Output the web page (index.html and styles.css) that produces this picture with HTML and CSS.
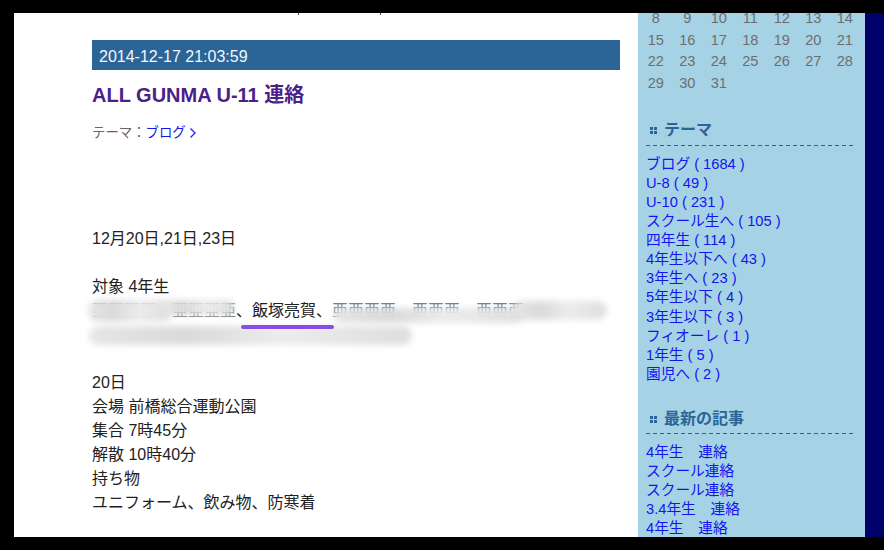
FILE: index.html
```html
<!DOCTYPE html>
<html lang="ja">

<head>
    <meta charset="UTF-8">
    <title>ALL GUNMA U-11 連絡</title>
    <link rel="stylesheet" href="styles.css">
</head>

<body>
    <div class="page">
        <div class="main">
            <span class="tick tick-a"></span>
            <span class="tick tick-b"></span>
            <div class="entry-date">2014-12-17 21:03:59</div>
            <h1 class="entry-title">ALL GUNMA U-11 連絡</h1>
            <div class="entry-theme">テーマ：<a href="#">ブログ</a>
                <svg class="chevron" width="8" height="12" viewBox="0 0 8 12" fill="none" stroke="#2a2ae8" stroke-width="1.4">
                    <polyline points="1.5 1.5 6 6 1.5 10.5"></polyline>
                </svg>
            </div>
            <div class="entry-body">
                <p>12月20日,21日,23日</p>
                <div class="names">
                    <div>対象 4年生</div>
                    <div class="names-row"><span class="hidden-name">亜亜亜亜、亜亜亜亜</span>、飯塚亮賀、<span class="hidden-name">亜亜亜亜、亜亜亜、亜亜亜</span></div>
                    <div class="names-row"></div>
                    <span class="blur blur-a"></span>
                    <span class="blur blur-a2"></span>
                    <span class="blur blur-b"></span>
                    <span class="blur blur-b2"></span>
                    <span class="blur blur-c"></span>
                    <span class="marker"></span>
                </div>
                <p class="block">20日<br>会場 前橋総合運動公園<br>集合 7時45分<br>解散 10時40分<br>持ち物<br>ユニフォーム、飲み物、防寒着</p>
            </div>
        </div>

        <div class="side">
            <div class="calendar">
                <span>8</span><span>9</span><span>10</span><span>11</span><span>12</span><span>13</span><span>14</span>
                <span>15</span><span>16</span><span>17</span><span>18</span><span>19</span><span>20</span><span>21</span>
                <span>22</span><span>23</span><span>24</span><span>25</span><span>26</span><span>27</span><span>28</span>
                <span>29</span><span>30</span><span>31</span>
            </div>

            <h2 class="side-title">テーマ</h2>
            <ul class="side-list">
                <li><a href="#">ブログ ( 1684 )</a></li>
                <li><a href="#">U-8 ( 49 )</a></li>
                <li><a href="#">U-10 ( 231 )</a></li>
                <li><a href="#">スクール生へ ( 105 )</a></li>
                <li><a href="#">四年生 ( 114 )</a></li>
                <li><a href="#">4年生以下へ ( 43 )</a></li>
                <li><a href="#">3年生へ ( 23 )</a></li>
                <li><a href="#">5年生以下 ( 4 )</a></li>
                <li><a href="#">3年生以下 ( 3 )</a></li>
                <li><a href="#">フィオーレ ( 1 )</a></li>
                <li><a href="#">1年生 ( 5 )</a></li>
                <li><a href="#">園児へ ( 2 )</a></li>
            </ul>

            <h2 class="side-title">最新の記事</h2>
            <ul class="side-list">
                <li><a href="#">4年生　連絡</a></li>
                <li><a href="#">スクール連絡</a></li>
                <li><a href="#">スクール連絡</a></li>
                <li><a href="#">3.4年生　連絡</a></li>
                <li><a href="#">4年生　連絡</a></li>
            </ul>
        </div>
    </div>
</body>

</html>
```

FILE: styles.css
```css
html,
body {
    margin: 0;
    height: 100%;
    background-color: #000;
    overflow: hidden;
}

body {
    font-family: "Liberation Sans", "Noto Sans CJK JP", sans-serif;
    padding: 13px 0;
    box-sizing: border-box;
}

a {
    color: #1414ee;
    text-decoration: none;
}

.page {
    display: flex;
    height: 524px;
    margin-left: 14px;
    background-color: #00006a;
    overflow: hidden;
}

.main {
    position: relative;
    width: 528px;
    padding: 27px 18px 0 78px;
    flex-shrink: 0;
    background-color: #fff;
    color: #222;
}

.tick {
    position: absolute;
    top: 0;
    width: 1px;
    height: 2px;
    background-color: #444;
}

.tick-a {
    left: 284px;
}

.tick-b {
    left: 366px;
}

.entry-date {
    height: 30px;
    padding-left: 7px;
    background-color: #2b6496;
    color: #f4f8fb;
    font-size: 16px;
    line-height: 33px;
}

.entry-title {
    margin: 10px 0 0;
    color: #4b2088;
    font-size: 20px;
    line-height: 30px;
    font-weight: bold;
}

.entry-theme {
    margin-top: 13px;
    color: #666;
    font-size: 13.4px;
    line-height: 20px;
}

.chevron {
    vertical-align: -2px;
}

.entry-body {
    margin-top: 84px;
    font-size: 16px;
    line-height: 24px;
}

.entry-body p {
    margin: 0 0 24px;
}

.names {
    position: relative;
    margin-bottom: 24px;
}

.names-row {
    height: 24px;
    white-space: nowrap;
    overflow: hidden;
}

.hidden-name {
    color: #777;
}

/* smudges over the names, the tops or bottoms of some letters stay visible */
.blur {
    position: absolute;
    background: linear-gradient(90deg, #e6e6e6, #dadada 30%, #ececec 60%, #dedede);
    border-radius: 10px;
    filter: blur(3px);
}

.blur-a {
    left: -4px;
    top: 25px;
    width: 84px;
    height: 22px;
}

.blur-a2 {
    left: 70px;
    top: 25px;
    width: 73px;
    height: 15px;
}

.blur-b {
    left: 241px;
    top: 33px;
    width: 190px;
    height: 15px;
}

.blur-b2 {
    left: 420px;
    top: 26px;
    width: 95px;
    height: 19px;
}

.blur-c {
    left: -3px;
    top: 51px;
    width: 323px;
    height: 19px;
}

.marker {
    position: absolute;
    left: 149px;
    top: 50px;
    width: 93px;
    height: 4px;
    border-radius: 2px;
    background-color: #8a4be8;
}

.side {
    flex: 0 0 227px;
    padding: 0 9px 0 8px;
    box-sizing: border-box;
    background-color: #a5d3e5;
    overflow: hidden;
}

.calendar {
    display: grid;
    grid-template-columns: repeat(7, 31.5px);
    grid-auto-rows: 21.7px;
    width: 221px;
    margin: -5px 0 0 -6px;
    color: #6e6e6e;
    font-size: 14.6px;
    line-height: 21.7px;
    text-align: center;
}

.side-title {
    margin: 23px 0 0;
    padding: 0 0 4px 18px;
    position: relative;
    background: repeating-linear-gradient(90deg, #2b6496 0 4px, transparent 4px 7px) left bottom / 100% 1px no-repeat;
    color: #2b6496;
    font-size: 16px;
    line-height: 24px;
    font-weight: bold;
}

.side-title::before {
    content: "";
    position: absolute;
    left: 4px;
    top: 9px;
    width: 3px;
    height: 3px;
    background-color: #2b6496;
    box-shadow: 4px 0 #2b6496, 0 4px #2b6496, 4px 4px #2b6496;
}

.side-list {
    list-style: none;
    margin: 9px 0 0;
    padding: 0;
    font-size: 14.7px;
    line-height: 19.1px;
}

.side-list + .side-title {
    margin-top: 23px;
    padding-bottom: 3px;
}
```
